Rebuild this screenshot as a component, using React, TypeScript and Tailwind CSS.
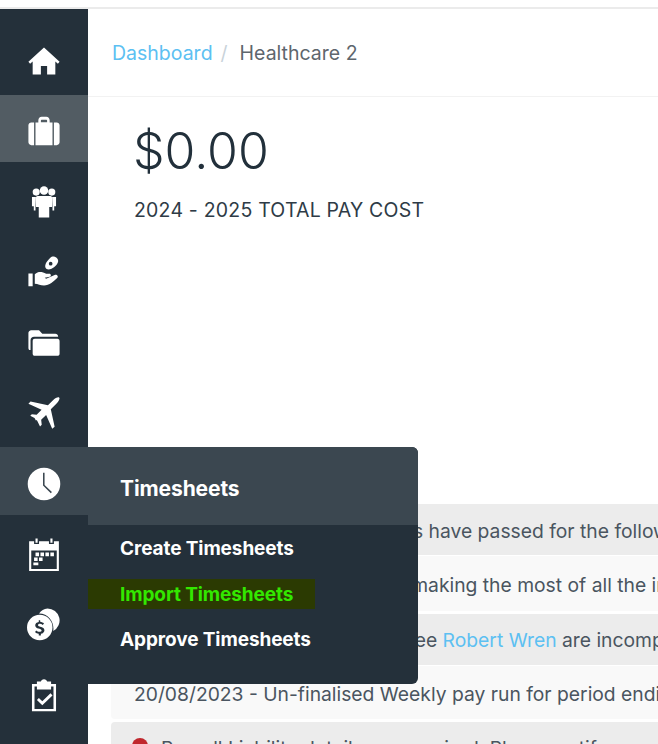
const Sidebar = [
  { key: "home", box: "h-[86px] pt-[17px]", icon: <path d="M12 2.500 1 12.500l1.200 1.400L4 12.400V21.500h5.800v-6h4.400v6H20v-9.100l1.800 1.500 1.200-1.400z" /> },
  {
    key: "case",
    box: "h-[67px] bg-[#525c63] pt-[5px]",
    icon: <path fillRule="evenodd" d="M8 6V4.500C8 3.100 9 2 10.400 2h3.200C15 2 16 3.100 16 4.500V6h2v16H6V6zm1.800-.2h4.400V4.600c0-.3-.2-.5-.5-.5h-3.400c-.3 0-.5.2-.5.5zM5 6v16H3c-1 0-2-.9-2-2V8c0-1.100 1-2 2-2zm14 0h2c1 0 2 .9 2 2v12c0 1.100-1 2-2 2h-2z" />,
  },
  {
    key: "people",
    box: "h-[72px] pt-[8px]",
    icon: (
      <>
        <circle cx="12" cy="3.800" r="3" />
        <circle cx="6.500" cy="5" r="2.500" />
        <circle cx="17.500" cy="5" r="2.500" />
        <path d="M3.500 8.500h2.800L6 15.500v2.500H4.800v-3H3.500zM20.500 8.500h-2.800L18 15.500v2.500h1.200v-3h1.300z" />
        <path d="M7.500 7.800h9c.8 0 1.200.6 1.200 1.300V15.500h-2V23H8.300v-7.500h-2V9.100c0-.7.400-1.300 1.200-1.300z" />
      </>
    ),
  },
  {
    key: "hand",
    box: "h-[70px] pt-[6px]",
    icon: <path fillRule="evenodd" d="M18 1c2.400 0 4 1.300 4 3.200 0 1.900-2.200 4.300-4.700 5.500-1.900.9-3.800.6-4.300-.9-.6-2 1.100-4.500 2.800-6.100C16.500 2 17.200 1 18 1zm-1.300 3.800a1.300 1.300 0 1 0 0 2.600 1.300 1.300 0 0 0 0-2.600zM1 13h3v9H1zm4.500.5c2.500-2 5-1.800 8-.3h2.300c1.200 0 1.500 1.800.2 2.200l-3.500.6 1 .8 6-2.700c1.500-.7 3 .9 1.800 2.200-2.400 2.400-5.500 5.300-9.300 5.300-2.500 0-4.300-1.300-6.500-1.300z" />,
  },
  {
    key: "folder",
    box: "h-[71px] pt-[7px]",
    icon: <path d="M1 5c0-1 .8-2 2-2h5.500l2.300 2.500H20c1 0 2 .8 2 2H5c-1.500 0-2.500 1-2.500 2.500V17H2c-.6 0-1-.6-1-1.500zM5.500 9H21.500c1 0 1.500.8 1.500 1.700v8.800c0 1-.7 1.500-1.500 1.500H5.500C4.600 21 4 20.400 4 19.500v-9C4 9.600 4.600 9 5.500 9z" />,
  },
  {
    key: "plane",
    box: "h-[72px] pt-[4px]",
    icon: <path d="M22.800 1.200c.6.600-.6 2.800-2.600 4.800l-3.400 3.400 2.700 12.300-1.700 1.500-4.300-9.800-3.500 3.400.4 3.500-1.200 1.200-2-4-.5-.6-.4.4-1-1.700-3-1.700 1.100-1.100 3.400.4 3.500-3.500L1 5.400l1.500-1.600L14.800 6.500l3.400-3.400c2-2 4-2.500 4.600-1.900z" />,
  },
];

const Below = [
  {
    key: "calendar",
    box: "h-[72px] pt-[6px]",
    icon: <path fillRule="evenodd" d="M6 1h1.500v3H6zM16.500 1H18v3h-1.500zM1.500 3H5v2h3.500V3h7v2H19V3h3.500v21h-21zM3 9.500V22.500h18V9.500zM6 11h2.500v2.500H6zM9.500 11H12v2.500H9.500zM13 11h2.500v2.500H13zM16.500 11H19v2.500h-2.500zM5 14.500h2.500V17H5zM8.500 14.500H11V17H8.500zM4.500 18H8v2H4.500z" />,
  },
  {
    key: "coins",
    box: "h-[70px] pt-[4px]",
    icon: (
      <>
        <path d="M14.500 1a8.500 8.500 0 0 1 4 16c1-6-3-12.500-10-12.500A8.400 8.400 0 0 1 14.500 1z" />
        <path fillRule="evenodd" d="M9 5.500a9 9 0 1 1 0 18 9 9 0 0 1 0-18zm-.7 3.800v1.200c-1.500.2-2.500 1.100-2.500 2.400 0 3 4.500 2 4.500 3.600 0 .7-.8 1-1.600 1-.8 0-1.600-.4-2.200-1l-.8 1.200c.6.700 1.500 1.100 2.600 1.200v1.300h1.500v-1.300c1.500-.2 2.500-1.200 2.500-2.500 0-3-4.500-2.100-4.500-3.600 0-.6.600-.9 1.300-.9.700 0 1.400.3 2 .8l.9-1.100c-.7-.6-1.500-1-2.700-1.200V9.300z" />
      </>
    ),
  },
  {
    key: "clipboard",
    box: "h-[70px] pt-[6px]",
    icon: <path fillRule="evenodd" d="M12 .8c1.200 0 2 .8 2.200 1.700H17v1.800h3.500V23.500h-17V4.300H7V2.500h2.800C10 1.600 10.800.8 12 .8zM5.300 6v15.800h13.400V6H17v2.200H7V6zm11.300 4.800 1.400 1.500-7.200 7-3.800-3.700 1.400-1.500 2.400 2.300z" />,
  },
];

function NavIcon({ children }: { children: React.ReactNode }) {
  return (
    <svg viewBox="0 0 24 24" className="w-[34px] h-[34px] text-white" fill="currentColor">
      {children}
    </svg>
  );
}

export default function App() {
  return (
    <div
      className="relative w-[658px] h-[744px] overflow-hidden bg-white text-[#2a3843]"
      style={{ fontFamily: '"Inter", "Open Sans", sans-serif' }}
    >
      <div className="h-[9px] border-b-2 border-[#ebebeb]" />
      <div className="flex">
        <nav className="w-[88px] h-[735px] shrink-0 bg-[#24303a] flex flex-col">
          {Sidebar.map((item) => (
            <div key={item.key} className={`${item.box} flex items-center justify-center`}>
              <NavIcon>{item.icon}</NavIcon>
            </div>
          ))}
          <div className="h-[68px] bg-[#3b4750] pt-[6px] flex items-center justify-center">
            <NavIcon>
              <path fillRule="evenodd" d="M12 .5a11.500 11.500 0 1 1 0 23 11.500 11.500 0 0 1 0-23zM11.300 4v9l5.500 5.500.8-.8-5.200-5V4z" />
            </NavIcon>
          </div>
          {Below.map((item) => (
            <div key={item.key} className={`${item.box} flex items-center justify-center`}>
              <NavIcon>{item.icon}</NavIcon>
            </div>
          ))}
        </nav>
        <main className="flex-1 min-w-0">
          <div className="h-[88px] pl-[24px] pt-[2px] flex items-center border-b border-[#f2f2f2] text-[19.500px] whitespace-nowrap">
            <a className="text-[#5cc0f2]">Dashboard</a>
            <span className="text-[#c9d3da] ml-[8px]">/</span>
            <span className="text-[#5e666d] ml-[12px]">Healthcare 2</span>
          </div>
          <div className="pl-[46px] pt-[23px] h-[407px]">
            <div className="text-[50px] leading-[62px] font-light text-[#22303b] -ml-[1px]">$0.00</div>
            <div className="mt-[16px] text-[19.500px] leading-[24px] tracking-[0.2px] text-[#2e3b46]">2024 - 2025 TOTAL PAY COST</div>
          </div>
          <div className="ml-[23px] flex flex-col text-[19.300px] text-[#4a5560] whitespace-nowrap">
            <div className="h-[51px] pt-[3px] flex items-center pl-[23px] bg-[#ececec] rounded-l-[4px]">
              Your next award rate conditions have passed for the following employees
            </div>
            <div className="mt-[1px] h-[55px] pt-[3px] flex items-center pl-[23px] bg-[#f9f9f9] rounded-l-[4px]">
              It seems you are not currently making the most of all the information
            </div>
            <div className="mt-[3px] h-[51px] pt-[2px] flex items-center pl-[23px] bg-[#ececec] rounded-l-[4px]">
              The bank details of the employee&nbsp;<a className="text-[#5cc0f2]">Robert Wren</a>&nbsp;are incomplete
            </div>
            <div className="mt-[1px] h-[53px] pt-[3px] flex items-center pl-[23px] bg-[#f9f9f9] rounded-l-[4px]">
              20/08/2023 - Un-finalised Weekly pay run for period ending
            </div>
            <div className="mt-[3px] h-[52px] flex items-center pl-[21px] gap-[13px] bg-[#ececec] rounded-l-[4px]">
              <span className="w-[16px] h-[16px] -mt-[5px] rounded-full bg-[#c0272d]" />
              Payroll Liability details are required. Please notify
            </div>
          </div>
        </main>
      </div>
      {/* flyout over the page */}
      <div className="absolute left-[88px] top-[447px] w-[330px] h-[237px] bg-[#24303a] rounded-r-[6px] overflow-hidden font-bold text-white text-[19px] tracking-[-0.1px]">
        <div className="h-[78px] bg-[#3b4750] pl-[32px] pt-[27px] leading-[30px] text-[21px]">Timesheets</div>
        <div className="pl-[32px] pt-[9px] leading-[30px]">Create Timesheets</div>
        <div className="mt-[15px] h-[30px] w-[227px] pl-[32px] pt-[1px] bg-[#2b3a02] text-[#33e800] leading-[30px]">Import Timesheets</div>
        <div className="pl-[32px] mt-[16px] leading-[30px]">Approve Timesheets</div>
      </div>
    </div>
  );
}
